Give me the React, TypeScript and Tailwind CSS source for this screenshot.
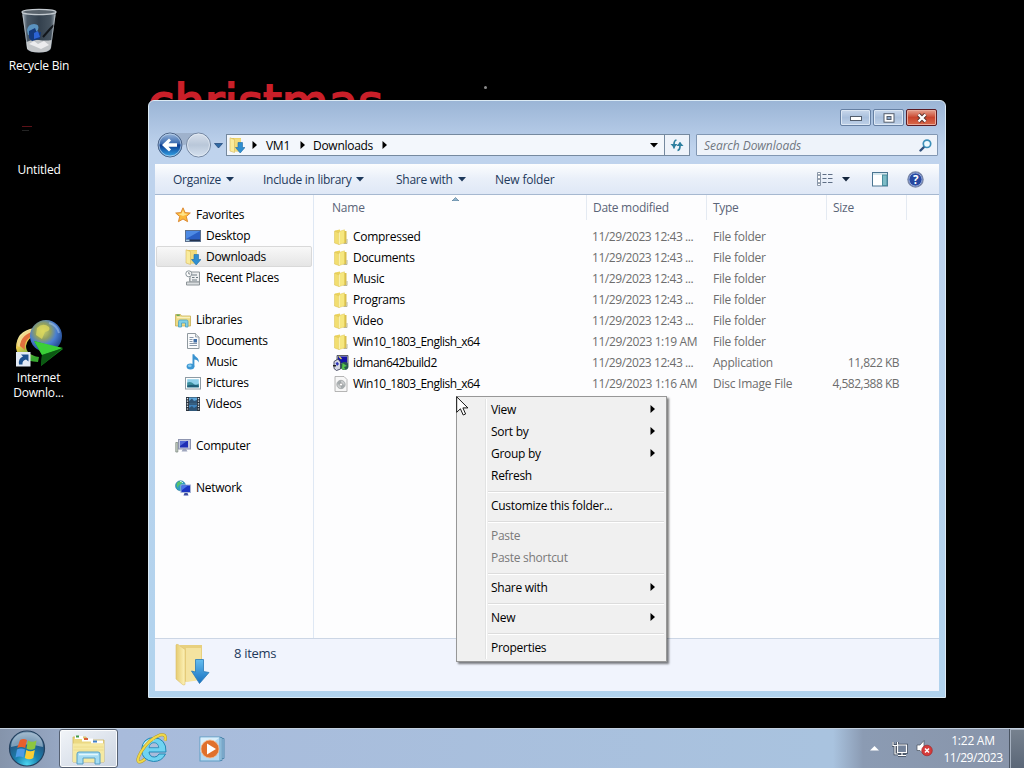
import React from 'react';

type IconProps = { className?: string };

interface NavEntry {
  label: string;
  icon: React.FC<IconProps>;
  level: number;
  selected?: boolean;
}

interface FileEntry {
  name: string;
  icon: React.FC<IconProps>;
  date: string;
  type: string;
  size?: string;
}

interface MenuEntry {
  label: string;
  submenu?: boolean;
  disabled?: boolean;
}

/* ---------- icons ---------- */

const FolderIcon: React.FC<IconProps> = ({ className }) => (
  <svg className={className} width="16" height="16" viewBox="0 0 16 16" aria-hidden="true">
    <path d="M2 1.500 7 .5v14l-5-.5z" fill="#ecd45e" />
    <path d="M10 2h3.500v12.500H10z" fill="#d9bf4c" />
    <path d="M6 2.500 11.500.8v13L6 15.500z" fill="#f6e77e" stroke="#e0c858" strokeWidth=".5" />
    <path d="M1.500 2 6 3.800v11.700L1.500 14z" fill="#f2de70" stroke="#d9bf50" strokeWidth=".5" />
    <path d="M6.300 3.500v11.500" stroke="#fdf8c8" strokeWidth=".9" />
    <path d="M11 14.500h3V10" fill="none" stroke="#b9b798" />
  </svg>
);

const DownloadsIcon: React.FC<IconProps> = ({ className }) => (
  <svg className={className} width="16" height="16" viewBox="0 0 16 16" aria-hidden="true">
    <path d="M1 1h11v13.500H4z" fill="#e6c75a" />
    <path d="M5 1.500h7V14H5z" fill="#f2dc7c" />
    <path d="M1 .8 5.500 2.500v13L1 14z" fill="#f9eb9c" stroke="#d9b95a" strokeWidth=".6" />
    <path d="M9 5.500h4.500v5H16L11.200 16 6.500 10.500H9z" fill="#2f8fd0" stroke="#1c6ca8" strokeWidth=".6" />
  </svg>
);

const StarIcon: React.FC<IconProps> = ({ className }) => (
  <svg className={className} width="16" height="16" viewBox="0 0 16 16" aria-hidden="true">
    <path d="m8 .8 2.100 4.800 5.200.4-4 3.500 1.300 5.200L8 12l-4.600 2.700 1.300-5.200L.7 6l5.200-.4z" fill="#fbb83a" stroke="#d9832b" strokeWidth=".9" strokeLinejoin="round" />
    <path d="m8 3 1.400 3.500 3.600.4L8 9 3 6.900l3.600-.4z" fill="#ffe48a" />
  </svg>
);

const DesktopIcon: React.FC<IconProps> = ({ className }) => (
  <svg className={className} width="16" height="16" viewBox="0 0 16 16" aria-hidden="true">
    <rect x=".5" y="2.500" width="15" height="11" fill="#2a5fc4" stroke="#5b6f8c" />
    <path d="M1 3h14L1 11z" fill="#4d8ae4" />
    <path d="M1 11.500h14V13H1z" fill="#23324f" />
    <path d="M1 11.500h3.500V13H1z" fill="#a8cbe6" />
  </svg>
);

const RecentIcon: React.FC<IconProps> = ({ className }) => (
  <svg className={className} width="16" height="16" viewBox="0 0 16 16" aria-hidden="true">
    <path d="M5 2h9.500v10H5z" fill="#eef0f1" stroke="#8d9498" />
    <path d="M1.500 12h13v3h-13z" fill="#d9dddf" stroke="#8d9498" />
    <path d="M7 5h5M7 7.500h2.500M11 7.500h2M7 10h5" stroke="#6f7b82" />
    <circle cx="3.800" cy="3.800" r="3" fill="#fff" stroke="#8a949a" />
    <path d="M3.800 2v2h1.500" fill="none" stroke="#5f6b72" strokeWidth=".8" />
    <path d="M4.500 8v4" stroke="#9aa2a6" />
  </svg>
);

const LibrariesIcon: React.FC<IconProps> = ({ className }) => (
  <svg className={className} width="16" height="16" viewBox="0 0 16 16" aria-hidden="true">
    <path d="M.5 2.500h5l1 1.500h9v10H.5z" fill="#edda83" stroke="#c7ae55" strokeWidth=".8" />
    <path d="M1.500 3.200h3.200" stroke="#5aa857" strokeWidth="1.400" />
    <path d="M2 5.500h13" stroke="#f9f1bf" strokeWidth="1.500" />
    <path d="M3.500 15V9.500q0-1.500 1.500-1.500h6.500q1.500 0 1.500 1.500V15h-2.500v-4h-4v4z" fill="#7fd0e6" stroke="#4b9fc0" strokeWidth=".8" />
  </svg>
);

const DocumentIcon: React.FC<IconProps> = ({ className }) => (
  <svg className={className} width="16" height="16" viewBox="0 0 16 16" aria-hidden="true">
    <path d="M2.500.5h8l3.500 3.500v11.500H2.500z" fill="#fafbfc" stroke="#8f989e" />
    <path d="M10.500.5v3.500H14" fill="#dfe5e8" stroke="#8f989e" strokeWidth=".8" />
    <path d="M4.500 4.500h4M4.500 6.500h3M4.500 8.500h3M4.500 10.500h7.500M4.500 12.500h7.500" stroke="#7c8ca0" strokeWidth=".9" />
    <path d="M8.500 6h3.500v3.500H8.500z" fill="#3f6da6" />
  </svg>
);

const MusicIcon: React.FC<IconProps> = ({ className }) => (
  <svg className={className} width="16" height="16" viewBox="0 0 16 16" aria-hidden="true">
    <ellipse cx="5.500" cy="12.500" rx="3.900" ry="3" fill="#3c97d3" />
    <path d="M7.500.3h1.700c.3 2.700 5.300 3.200 4.600 8.200-.8-2-2.400-2.700-4.400-2.900v7.200H7.500z" fill="#3a93d0" />
    <ellipse cx="4.800" cy="11.800" rx="1.900" ry="1.200" fill="#8accf0" />
  </svg>
);

const PicturesIcon: React.FC<IconProps> = ({ className }) => (
  <svg className={className} width="16" height="16" viewBox="0 0 16 16" aria-hidden="true">
    <rect x=".5" y="2.500" width="15" height="11.500" fill="#fdfefe" stroke="#8e9ba4" />
    <rect x="2.200" y="4.200" width="11.600" height="8.100" fill="#8fd0ea" />
    <path d="M2.200 7.500q4-1.500 6 1t5.600 0v3.800H2.200z" fill="#3d8f9e" />
    <path d="M2.200 10.500q6-1.500 11.600 0v1.800H2.200z" fill="#1f5e78" />
  </svg>
);

const VideosIcon: React.FC<IconProps> = ({ className }) => (
  <svg className={className} width="16" height="16" viewBox="0 0 16 16" aria-hidden="true">
    <rect x="1" y="1" width="14" height="14" fill="#2a3440" />
    <rect x="4" y="1.500" width="8" height="6" fill="#5da7dc" />
    <rect x="4" y="8.500" width="8" height="6" fill="#3f83bd" />
    <path d="m4 5 3-2.500L9 5l3-1v3.500H4zM4 12l3-2 2 2 3-2v4.500H4z" fill="#2f5476" />
    <path d="M2.500 2v12M13.500 2v12" stroke="#e6ebef" strokeWidth="1.300" strokeDasharray="1.200 1.400" />
  </svg>
);

const ComputerIcon: React.FC<IconProps> = ({ className }) => (
  <svg className={className} width="16" height="16" viewBox="0 0 16 16" aria-hidden="true">
    <path d="M.8 4.500h2v9.500h-2z" fill="#c8d2c4" stroke="#7f8a84" strokeWidth=".8" />
    <rect x="3.500" y="1.500" width="12" height="9.500" fill="#c3c8dc" stroke="#8e95b0" />
    <rect x="5" y="3" width="8" height="6.500" fill="#1f2fb5" />
    <path d="M5 3h7L5 8z" fill="#5068d6" />
    <path d="M8 11h3l1.500 2.500H6.500z" fill="#9fa6bd" />
  </svg>
);

const NetworkIcon: React.FC<IconProps> = ({ className }) => (
  <svg className={className} width="16" height="16" viewBox="0 0 16 16" aria-hidden="true">
    <circle cx="5.500" cy="5.800" r="5" fill="#2f9fc4" stroke="#20739a" strokeWidth=".6" />
    <path d="M2 3q3-3 5-1 0 2-2 2.500T3 8Q1 6 2 3z" fill="#58c36a" />
    <path d="M5 1.500q2 0 3 1.500" stroke="#d6f5ec" fill="none" />
    <rect x="6" y="5" width="9.500" height="7.500" fill="#1d36c2" stroke="#a9b5d6" />
    <path d="M6.500 5.500H13l-6.500 5z" fill="#4a74e8" />
    <path d="M9.500 13h3l1 2.500h-5z" fill="#3c4da0" />
  </svg>
);

const InstallerIcon: React.FC<IconProps> = ({ className }) => (
  <svg className={className} width="16" height="16" viewBox="0 0 16 16" aria-hidden="true">
    <path d="M4 .5h11v9H4z" fill="#b9bcc6" stroke="#3b3e49" strokeWidth=".8" />
    <path d="M5 1.500h9v6.500H5z" fill="#1412a8" />
    <path d="M1 6.500 5 4l2.500 3v7l-4 1.500L1 13.500z" fill="#d5d8e4" stroke="#2b2d4a" strokeWidth=".8" />
    <path d="m2.500 8 2-1 1.500 2-2 2z" fill="#2c34b8" />
    <circle cx="11.500" cy="11" r="4" fill="#2a5a50" />
    <path d="m9.500 8 4.500 3-3 1 1.500 3-3.500-1z" fill="#54c74a" />
    <path d="M0 10h3v1.500H0z" fill="#222" />
    <path d="M6 1.500 8.500 4" stroke="#e9dc5d" strokeWidth="1.300" />
  </svg>
);

const DiscImageIcon: React.FC<IconProps> = ({ className }) => (
  <svg className={className} width="16" height="16" viewBox="0 0 16 16" aria-hidden="true">
    <path d="M2 .5h9l3 3v12H2z" fill="#f7f7f7" stroke="#a3a3a3" strokeWidth=".8" />
    <circle cx="8" cy="8.500" r="4.200" fill="#c9cccd" stroke="#a0a3a5" strokeWidth=".8" />
    <path d="M8 4.500A4 4 0 0 0 4.200 8.500L8 8.500zM8 12.500a4 4 0 0 0 3.800-4H8z" fill="#a5abad" />
    <circle cx="8" cy="8.500" r="1.500" fill="#fff" stroke="#888" strokeWidth=".6" />
  </svg>
);

const RecycleBinIcon = () => (
  <svg width="40" height="48" viewBox="0 0 40 48" aria-hidden="true">
    <defs>
      <linearGradient id="binGlass" x1="0" x2="1">
        <stop offset="0" stopColor="#aeb9c2" />
        <stop offset=".15" stopColor="#4b5a68" />
        <stop offset=".5" stopColor="#33404d" />
        <stop offset=".85" stopColor="#46535f" />
        <stop offset="1" stopColor="#a3adb5" />
      </linearGradient>
    </defs>
    <path d="M3 4h34l-5 36q-.5 4.500-12 4.500T8 40z" fill="url(#binGlass)" />
    <path d="M7.500 34q6-3 12.500-2t12.500 0l-1 9q-3 3.500-11.500 3.500T8 41z" fill="#c2c5c8" />
    <path d="m10 36 5-3 4 3 6-3 5 4-8 4-7-3z" fill="#ececee" />
    <path d="M8 22q1-6 7-6t4 6l-4 4-6 1z" fill="#5b93bf" />
    <path d="m10 23 6-3 2 5 4-1-1 7-8 2-3-3z" fill="#143a7c" />
    <path d="m15 25 4-2 2 6-6 2z" fill="#2c63d4" />
    <path d="m24 29 7-8 4-4" stroke="#12161b" strokeWidth="2" fill="none" />
    <ellipse cx="20" cy="4" rx="17" ry="2.600" fill="#59636c" stroke="#c3cad0" strokeWidth="1.300" />
    <path d="m4 7 4.500 33M36 7l-4.500 33" stroke="#d6dce0" strokeWidth="1" opacity=".5" />
  </svg>
);

const IdmIcon = () => (
  <svg width="50" height="48" viewBox="0 0 50 48" aria-hidden="true">
    <defs>
      <radialGradient id="idmGlobe" cx=".4" cy=".35" r=".7">
        <stop offset="0" stopColor="#ccd268" />
        <stop offset=".35" stopColor="#8f9f62" />
        <stop offset=".6" stopColor="#4a7fd0" />
        <stop offset="1" stopColor="#1d4287" />
      </radialGradient>
      <linearGradient id="idmSwoosh" x1="0" y1="0" x2=".5" y2="1">
        <stop offset="0" stopColor="#c3dc6e" />
        <stop offset=".25" stopColor="#f0e6a0" />
        <stop offset=".5" stopColor="#e9c84c" />
        <stop offset="1" stopColor="#37a82f" />
      </linearGradient>
    </defs>
    <path d="M20 9Q2 12 2 29q2 13 22 14l1-5Q12 36 12 27q1-8 11-12z" fill="url(#idmSwoosh)" />
    <path d="M20 10Q6 14 6 27l5 4q-2-12 12-16z" fill="#e2703e" />
    <path d="M20 10Q5 13 3.500 27l2 1Q7 15 21 12z" fill="#f3d98c" />
    <circle cx="32" cy="17" r="16" fill="url(#idmGlobe)" />
    <path d="M23 9q6-6 12-1 2 4-4 5l-3 7-6-4z" fill="#dfd95c" opacity=".75" />
    <path d="M35 4q8 2 10 10" stroke="#a9c9f2" strokeWidth="2" opacity=".5" fill="none" />
    <path d="m20 22 29 8-22 17 1-11z" fill="#148c1e" />
    <path d="m20 22 29 7-21 7z" fill="#3bcf38" />
    <path d="m28 36 21-7-22 18z" fill="#0c5913" />
    <rect x="2" y="33" width="14.500" height="14.500" fill="#e3eaf5" />
    <path d="M5 45.500q-1-6 4-8L7 35.500h7.500v7l-2.500-2Q8 41.500 8.500 45.500z" fill="#1f528f" />
  </svg>
);

const BigDownloadsIcon = () => (
  <svg width="36" height="44" viewBox="0 0 36 44" aria-hidden="true">
    <defs>
      <linearGradient id="bigFront" x1="0" x2="1">
        <stop offset="0" stopColor="#e6cc72" />
        <stop offset="1" stopColor="#fdf2b8" />
      </linearGradient>
      <linearGradient id="bigArrow" x1="0" x2="0" y1="0" y2="1">
        <stop offset="0" stopColor="#65bdf0" />
        <stop offset="1" stopColor="#1670c0" />
      </linearGradient>
    </defs>
    <path d="M6 2h22v34l-18 3z" fill="#e8d07f" />
    <path d="M12 5h15v32l-15 2z" fill="#f4e3a0" />
    <path d="M2 2q0-1 2-.5l7 5v35q-1 1-2.500 0L2 36z" fill="url(#bigFront)" stroke="#dcc06b" strokeWidth=".6" />
    <path d="M21.500 16.500h8v12l5.500 1-9.500 11L17.500 28l4 1z" fill="url(#bigArrow)" stroke="#2a7ab6" strokeWidth=".8" />
  </svg>
);

const StartOrb = () => (
  <svg width="38" height="38" viewBox="0 0 38 38" aria-hidden="true">
    <defs>
      <radialGradient id="orb" cx=".5" cy=".95" r=".95">
        <stop offset="0" stopColor="#4cd5f0" />
        <stop offset=".35" stopColor="#1b83b0" />
        <stop offset=".7" stopColor="#235a86" />
        <stop offset="1" stopColor="#7e9db7" />
      </radialGradient>
    </defs>
    <circle cx="19" cy="18.500" r="17.500" fill="url(#orb)" stroke="#23405e" strokeWidth="1.200" />
    <path d="M3 17q1-14 16-14.500T35 17Q19 12 3 17z" fill="#d5e2ec" opacity=".5" />
    <path d="M12 10q3.500-2 7 0l-1.800 8q-4-2-8 0z" fill="#e8602c" />
    <path d="M20 10.500q4 2.500 8.500 0L27 18.500q-4 2.500-8.500 0z" fill="#8dc63f" />
    <path d="M9 19.500q4-2 8 0l-1.500 8q-4-2-8 0z" fill="#4d9be6" />
    <path d="M18.300 20q4 2.500 8.500 0l-1.500 8q-4 2.500-8.500 0z" fill="#fbce34" />
  </svg>
);

const ExplorerTaskIcon = () => (
  <svg width="34" height="32" viewBox="0 0 34 32" aria-hidden="true">
    <path d="M1 3h13l1.500 3H32v22H1z" fill="#ecd983" stroke="#cdb45e" strokeWidth=".8" />
    <path d="M3 3.500h8" stroke="#fff" strokeWidth="3" />
    <path d="M4 2.500h3" stroke="#3f9b49" strokeWidth="2" />
    <path d="M10 6h11" stroke="#fff" strokeWidth="3" />
    <path d="M12 5h4" stroke="#d8603c" strokeWidth="2" />
    <path d="M19 8h12" stroke="#fff" strokeWidth="3" />
    <path d="M21 7.500h4" stroke="#3f7fcb" strokeWidth="2" />
    <path d="M1 9.500h31V28H1z" fill="#f5e9a2" />
    <path d="M1.500 13h30M1.500 16h30" stroke="#eedc8c" />
    <path d="M5 30V20q0-2 2-2h19q2 0 2 2v10h-5v-6H11v6z" fill="#a5dcf3" stroke="#569ec4" />
    <path d="M7 20.500h19" stroke="#e2f6fd" strokeWidth="1.500" />
  </svg>
);

const InternetExplorerIcon = () => (
  <svg width="34" height="34" viewBox="0 0 34 34" aria-hidden="true">
    <path d="M30.500 22Q27 29.500 18.500 29.500 7 28.500 6.500 18 7.500 6 18.500 5.500 31.500 6.500 31 20H14q.5 5 5.500 5 3 0 4.500-3z" fill="#6fd3f1" stroke="#2387b4" strokeWidth="1" />
    <path d="M14 15.700q.8-5 5-5t4.800 5z" fill="#aebfdb" stroke="#2387b4" strokeWidth=".8" />
    <path d="M9 13q3-5 10-5.200" stroke="#c8f1fc" strokeWidth="2" fill="none" />
    <path d="M30 8.500Q32 1.500 25 3 14 7 6 20q-5 8.500-2 10 2 .5 6-3" fill="none" stroke="#b99c25" strokeWidth="3" />
    <path d="M30 8.500Q32 1.500 25 3 14 7 6 20q-5 8.500-2 10 2 .5 6-3" fill="none" stroke="#efd84a" strokeWidth="2" />
  </svg>
);

const MediaPlayerIcon = () => (
  <svg width="28" height="28" viewBox="0 0 28 28" aria-hidden="true">
    <path d="M20 3.500h5v20h-5z" fill="#9fc5e4" stroke="#5289ae" />
    <path d="M17 2.500h6v23h-6z" fill="#b8d9ef" stroke="#5289ae" />
    <rect x="1" y="2" width="20" height="24" fill="#b5d9f2" stroke="#5f9dc4" />
    <path d="m1.500 2.500 19 0-19 15z" fill="#d9effb" />
    <circle cx="11" cy="14" r="9" fill="#e0702c" stroke="#f5b98d" strokeWidth=".8" />
    <path d="M8 8.500 17 14l-9 5.500z" fill="#fff" />
  </svg>
);

const SubmenuArrow = () => (
  <svg width="5" height="8" viewBox="0 0 5 8" aria-hidden="true">
    <path d="M.5 0 5 4 .5 8z" fill="#000" />
  </svg>
);

const DropArrow: React.FC<{ color?: string }> = ({ color = '#1e395b' }) => (
  <svg width="8" height="5" viewBox="0 0 8 5" aria-hidden="true">
    <path d="M0 0h8L4 4.500z" fill={color} />
  </svg>
);

/* ---------- data ---------- */

const navGroups: NavEntry[][] = [
  [
    { label: 'Favorites', icon: StarIcon, level: 0 },
    { label: 'Desktop', icon: DesktopIcon, level: 1 },
    { label: 'Downloads', icon: DownloadsIcon, level: 1, selected: true },
    { label: 'Recent Places', icon: RecentIcon, level: 1 },
  ],
  [
    { label: 'Libraries', icon: LibrariesIcon, level: 0 },
    { label: 'Documents', icon: DocumentIcon, level: 1 },
    { label: 'Music', icon: MusicIcon, level: 1 },
    { label: 'Pictures', icon: PicturesIcon, level: 1 },
    { label: 'Videos', icon: VideosIcon, level: 1 },
  ],
  [{ label: 'Computer', icon: ComputerIcon, level: 0 }],
  [{ label: 'Network', icon: NetworkIcon, level: 0 }],
];

const files: FileEntry[] = [
  { name: 'Compressed', icon: FolderIcon, date: '11/29/2023 12:43 ...', type: 'File folder' },
  { name: 'Documents', icon: FolderIcon, date: '11/29/2023 12:43 ...', type: 'File folder' },
  { name: 'Music', icon: FolderIcon, date: '11/29/2023 12:43 ...', type: 'File folder' },
  { name: 'Programs', icon: FolderIcon, date: '11/29/2023 12:43 ...', type: 'File folder' },
  { name: 'Video', icon: FolderIcon, date: '11/29/2023 12:43 ...', type: 'File folder' },
  { name: 'Win10_1803_English_x64', icon: FolderIcon, date: '11/29/2023 1:19 AM', type: 'File folder' },
  { name: 'idman642build2', icon: InstallerIcon, date: '11/29/2023 12:43 ...', type: 'Application', size: '11,822 KB' },
  { name: 'Win10_1803_English_x64', icon: DiscImageIcon, date: '11/29/2023 1:16 AM', type: 'Disc Image File', size: '4,582,388 KB' },
];

const menuGroups: MenuEntry[][] = [
  [
    { label: 'View', submenu: true },
    { label: 'Sort by', submenu: true },
    { label: 'Group by', submenu: true },
    { label: 'Refresh' },
  ],
  [{ label: 'Customize this folder...' }],
  [
    { label: 'Paste', disabled: true },
    { label: 'Paste shortcut', disabled: true },
  ],
  [{ label: 'Share with', submenu: true }],
  [{ label: 'New', submenu: true }],
  [{ label: 'Properties' }],
];

/* ---------- window parts ---------- */

const TitleBar = () => (
  <div className="flex h-[30px] shrink-0 items-start justify-end gap-[2px] pr-[2px] pt-[8px]">
    <button aria-label="Minimize" className="flex h-[17px] w-[31px] items-center justify-center rounded-[2px] border border-[#6680a3] bg-linear-to-b from-[#c9d8ec] via-[#a9bfdc] to-[#bfd1e8] shadow-[inset_0_0_0_1px_#dce7f4]">
      <svg width="12" height="6" viewBox="0 0 12 6"><rect x=".5" y="1.500" width="11" height="4" fill="#fff" stroke="#535d6c" /></svg>
    </button>
    <button aria-label="Maximize" className="flex h-[17px] w-[31px] items-center justify-center rounded-[2px] border border-[#6680a3] bg-linear-to-b from-[#c9d8ec] via-[#a9bfdc] to-[#bfd1e8] shadow-[inset_0_0_0_1px_#dce7f4]">
      <svg width="12" height="10" viewBox="0 0 12 10"><rect x="1" y=".7" width="10" height="8.500" fill="#fff" stroke="#535d6c" /><rect x="4" y="3.500" width="4" height="3" fill="#8fa9cb" stroke="#535d6c" /></svg>
    </button>
    <button aria-label="Close" className="flex h-[17px] w-[31px] items-center justify-center rounded-[2px] border border-[#5b1a22] bg-linear-to-b from-[#e3a08f] via-[#c8432c] to-[#d9694a] shadow-[inset_0_0_0_1px_#e9aa9a]">
      <svg width="12" height="10" viewBox="0 0 12 10"><path d="m2.500 1.500 7 7m0-7-7 7" stroke="#54322f" strokeWidth="4" /><path d="m2.500 1.500 7 7m0-7-7 7" stroke="#fff" strokeWidth="2.300" /></svg>
    </button>
  </div>
);

const AddressRow = () => (
  <div className="flex h-[33px] shrink-0 items-start">
    <svg className="ml-[2px] shrink-0" width="68" height="28" viewBox="0 0 68 28" aria-hidden="true">
      <defs>
        <linearGradient id="back" x1="0" x2="0" y1="0" y2="1">
          <stop offset="0" stopColor="#9db9dc" />
          <stop offset=".45" stopColor="#3768ae" />
          <stop offset=".5" stopColor="#0b3b90" />
          <stop offset="1" stopColor="#35a9ea" />
        </linearGradient>
        <linearGradient id="fwd" x1="0" x2="0" y1="0" y2="1">
          <stop offset="0" stopColor="#d9e1ec" />
          <stop offset=".5" stopColor="#b9c7d9" />
          <stop offset="1" stopColor="#d6e2f0" />
        </linearGradient>
      </defs>
      <path d="M13 2h28v8l-14 4-14-4z" fill="#9fb2cc" />
      <circle cx="13" cy="14" r="12" fill="url(#back)" stroke="#4d6487" />
      <circle cx="13" cy="14" r="11" fill="none" stroke="#c3d8ee" strokeWidth=".7" />
      <path d="M5 14 12 7.500l2 2L11.500 12.300h8.500v3.400h-8.500L14 18.500l-2 2z" fill="#fff" />
      <circle cx="41.500" cy="14" r="12" fill="url(#fwd)" stroke="#71849f" />
      <circle cx="41.500" cy="14" r="11" fill="none" stroke="#e7eef6" strokeWidth=".7" />
      <path d="M57.500 12.500h8l-4 4.500z" fill="#2f6aa5" stroke="#1d4475" strokeWidth=".7" />
    </svg>
    <div className="ml-[1px] mt-[3px] flex h-[22px] w-[439px] shrink-0 items-center border border-[#75899f] bg-[#f3f7fc]">
      <DownloadsIcon className="ml-[2px]" />
      <span className="ml-[7px]"><SubmenuArrow /></span>
      <span className="ml-[9px] w-[24px]">VM1</span>
      <span className="ml-[10px]"><SubmenuArrow /></span>
      <span className="ml-[8px] w-[60px]">Downloads</span>
      <span className="ml-[9px]"><SubmenuArrow /></span>
      <span className="ml-auto mr-[6px]"><DropArrow color="#000" /></span>
    </div>
    <button aria-label="Refresh" className="mt-[3px] flex h-[22px] w-[25px] items-center justify-center border border-l-0 border-[#75899f] bg-[#eef3fa]">
      <svg width="14" height="14" viewBox="0 0 14 14">
        <path d="M4 10.500V6.500M6.500 2Q4 2.500 4 6.500M10 4.500v4M7.500 12.500Q10 12 10 8" fill="none" stroke="#2d7f9f" strokeWidth="1.700" />
        <path d="M.5 6h7L4 10zM6.500 8h7L10 4z" fill="#2d7f9f" />
      </svg>
    </button>
    <div className="ml-[6px] mt-[3px] flex h-[22px] w-[242px] items-center justify-between rounded-[1px] border border-[#8197b3] bg-[#eef3fa] pl-[7px] pr-[5px]">
      <span className="italic tracking-[-0.05px] text-[#707780]">Search Downloads</span>
      <svg width="13" height="13" viewBox="0 0 13 13" aria-hidden="true">
        <path d="M6 7 1.500 11.500" stroke="#2f4f7c" strokeWidth="2.400" strokeLinecap="round" />
        <circle cx="8" cy="4.800" r="3.700" fill="#eefaff" stroke="#3c8fb8" strokeWidth="1.700" />
      </svg>
    </div>
  </div>
);

const Toolbar = () => (
  <div className="flex h-[31px] shrink-0 items-center border-b border-[#a6b8d0] bg-linear-to-b from-[#fcfdfe] via-[#e9eff9] via-50% to-[#dfe8f6] pl-[18px] text-[#1e395b]">
    <div className="flex w-[90px] items-center gap-[5px]">Organize <DropArrow /></div>
    <div className="flex w-[133px] items-center gap-[5px]">Include in library <DropArrow /></div>
    <div className="flex w-[99px] items-center gap-[5px]">Share with <DropArrow /></div>
    <div className="tracking-[-0.2px]">New folder</div>
    <div className="ml-auto flex items-center pr-[15px]">
      <svg width="16" height="14" viewBox="0 0 16 14" aria-hidden="true">
        <path d="M.5.5h3v13h-3z" fill="#fff" stroke="#8a97a8" />
        <path d="M1 3h2M1 7h2M1 11h2" stroke="#3b4e68" />
        <path d="M5.500 2.500h4M5.500 6.500h4M5.500 10.500h4M11 2.500h4.500M11 6.500h4.500M11 10.500h4.500" stroke="#5e6e85" />
      </svg>
      <span className="ml-[9px]"><DropArrow color="#14253c" /></span>
      <svg className="ml-[22px]" width="16" height="15" viewBox="0 0 16 15" aria-hidden="true">
        <rect x=".5" y=".5" width="15" height="13.500" fill="#fff" stroke="#4b7591" />
        <path d="M1 1h14v2H1z" fill="#d4e6ed" />
        <rect x="10.500" y="3" width="4.500" height="10.500" fill="#7dbcc7" stroke="#4a8d9d" />
      </svg>
      <svg className="ml-[19px]" width="17" height="17" viewBox="0 0 17 17" aria-hidden="true">
        <circle cx="8.500" cy="8.500" r="7.600" fill="#2748a0" stroke="#7c88a6" strokeWidth="1.300" />
        <circle cx="8.500" cy="8.500" r="6.500" fill="none" stroke="#a9bce6" strokeWidth=".8" />
        <text x="8.500" y="12.700" textAnchor="middle" fontFamily="Open Sans, sans-serif" fontWeight="700" fontSize="11.500" fill="#fff">?</text>
      </svg>
    </div>
  </div>
);

const NavPane = () => (
  <div className="flex w-[159px] shrink-0 flex-col gap-[21px] border-r border-[#dfe8f4] pt-[9px]">
    {navGroups.map((group) => (
      <ul key={group[0].label}>
        {group.map(({ label, icon: Icon, level, selected }) => (
          <li
            key={label}
            className={`ml-[1px] mr-[1px] flex h-[21px] items-center gap-[5px] rounded-[2px] border ${level ? 'pl-[28px]' : 'pl-[18px]'} ${
              selected ? 'border-[#d9d9d9] bg-linear-to-b from-[#f8f8f8] to-[#e5e5e5]' : 'border-transparent'
            }`}
          >
            <Icon className="shrink-0" />
            <span>{label}</span>
          </li>
        ))}
      </ul>
    ))}
  </div>
);

const FileList = () => (
  <div className="min-w-0 grow">
    <div className="flex h-[25px] text-[#5a6478]">
      <div className="flex w-[273px] items-center border-r border-[#e4eaf2] pl-[18px] tracking-[-0.2px]">
        Name
        <svg className="mb-[18px] ml-[87px]" width="7" height="4" viewBox="0 0 7 4" aria-hidden="true"><path d="M0 4 3.500.5 7 4z" fill="#8fb4cd" stroke="#4b6f8b" strokeWidth=".6" /></svg>
      </div>
      <div className="flex w-[120px] items-center border-r border-[#e4eaf2] pl-[6px]">Date modified</div>
      <div className="flex w-[120px] items-center border-r border-[#e4eaf2] pl-[6px]">Type</div>
      <div className="flex w-[80px] items-center border-r border-[#e4eaf2] pl-[6px]">Size</div>
    </div>
    <div className="pt-[6px]">
      {files.map(({ name, icon: Icon, date, type, size }, i) => (
        <div key={i} className="flex h-[21px] items-center text-[#6d6d6d]">
          <Icon className="ml-[19px] shrink-0" />
          <span className={`ml-[4px] w-[239px] text-black ${/\d/.test(name) ? 'tracking-[-0.52px]' : ''}`}>{name}</span>
          <span className={`w-[121px] ${date.endsWith('AM') ? 'tracking-[-0.38px]' : 'tracking-[-0.44px]'}`}>{date}</span>
          <span className="w-[107px] tracking-[-0.24px]">{type}</span>
          <span className="w-[79px] text-right tracking-[-0.5px]">{size}</span>
        </div>
      ))}
    </div>
  </div>
);

const ExplorerWindow = () => (
  <section className="absolute left-[148px] top-[100px] flex h-[598px] w-[798px] flex-col rounded-t-[6px] border border-[#dcebf5] bg-linear-to-b from-[#9bb5d6] via-[#bfd3ed] via-8% to-[#b1d3ee] px-[6px] pb-[6px]">
    <TitleBar />
    <AddressRow />
    <div className="flex grow flex-col bg-[#fdfdfe]">
      <Toolbar />
      <div className="flex h-[443px]">
        <NavPane />
        <FileList />
      </div>
      <div className="flex grow items-start border-t border-[#ccd6e5] bg-[#f1f4fd] text-[#1e395b]">
        <span className="ml-[19px] mt-[4px]"><BigDownloadsIcon /></span>
        <span className="ml-[24px] mt-[7px] text-[13px] tracking-[-0.3px]">8 items</span>
      </div>
    </div>
  </section>
);

const ContextMenu = () => (
  <div className="absolute left-[456px] top-[396px] h-[266px] w-[211px] border border-[#979797] bg-[#f0f0f0] p-[2px] shadow-[2px_2px_2px_rgba(0,0,0,0.5)]">
    <div className="flex h-full">
      <div className="w-[27px] shrink-0 border-r border-[#e2e3e3] shadow-[1px_0_0_#fff]" />
      <div className="grow">
        {menuGroups.map((group, i) => (
          <div key={i}>
            {i > 0 && (
              <div className="flex h-[8px] items-center pl-[2px] pt-px">
                <div className="h-[2px] w-full border-t border-[#dcdcdc] bg-white" />
              </div>
            )}
            {group.map(({ label, submenu, disabled }) => (
              <div key={label} className={`flex h-[22px] items-center justify-between pb-[2px] pl-[5px] pr-[9px] ${disabled ? 'text-[#7a7a7a]' : 'text-black'}`}>
                <span>{label}</span>
                {submenu && <SubmenuArrow />}
              </div>
            ))}
          </div>
        ))}
      </div>
    </div>
  </div>
);

const Taskbar = () => (
  <footer className="relative flex h-[40px] shrink-0 items-center border-t border-[#c3d0df] bg-linear-to-r from-[#8594ab] from-0% via-[#8c9cb4] via-[58px] to-[#8a97ac]">
    <div className="flex h-full grow items-center bg-linear-to-r from-[#8594ab] from-0% via-[#a8bbdb] via-[118px] to-[#a9c3df]">
      <div className="ml-[8px]"><StartOrb /></div>
      <div className="ml-[13px] flex h-[39px] w-[59px] items-center justify-center rounded-[3px] border border-[#566172] bg-linear-to-br from-[#f1f4f8] to-[#ccd5e2] pt-[2px] shadow-[inset_0_0_0_1px_#fbfcfd]">
        <ExplorerTaskIcon />
      </div>
      <div className="ml-[17px]"><InternetExplorerIcon /></div>
      <div className="ml-[30px]"><MediaPlayerIcon /></div>
    </div>
    <div className="flex h-full w-[199px] shrink-0 items-center bg-linear-to-r from-[#a9c3df] from-[8px] via-[#8b9bb3] via-[38px] to-[#8894a9] pl-[45px] text-white">
      <svg width="9" height="5" viewBox="0 0 9 5" aria-hidden="true"><path d="M0 4.500 4.500 0 9 4.500z" fill="#fff" /></svg>
      <svg className="ml-[13px]" width="16" height="16" viewBox="0 0 16 16" aria-hidden="true">
        <path d="M5.500 4h9v7.500h-9zM10 12v2.500M6 14.500h8M1 1v3.500h4.500V1M3 4.500V13h3" fill="none" stroke="#3a4555" strokeWidth="2.600" />
        <path d="M5.500 4h9v7.500h-9z" fill="#74839a" />
        <path d="M5.500 4h9v7.500h-9zM10 12v2.500M6 14.500h8M1 1v3.500h4.500V1M3 4.500V13h3" fill="none" stroke="#fff" strokeWidth="1.200" />
      </svg>
      <svg className="ml-[8px]" width="17" height="17" viewBox="0 0 17 17" aria-hidden="true">
        <path d="M1 5h3l4-4.500v14L4 10.500H1z" fill="#fff" stroke="#48525f" strokeWidth=".7" />
        <circle cx="11" cy="10.500" r="5.300" fill="#d53b3b" stroke="#9b2222" strokeWidth=".6" />
        <path d="m9 8.500 4 4m0-4-4 4" stroke="#fff" strokeWidth="1.500" />
      </svg>
      <div className="ml-auto w-[62px] text-center leading-[17px]">
        <div className="tracking-[-0.25px]">1:22 AM</div>
        <div className="tracking-[-0.45px]">11/29/2023</div>
      </div>
      <div className="ml-[5px] h-full w-[15px] border-l border-[#4b5563] bg-linear-to-b from-[#77828f] to-[#5b6778] shadow-[inset_1px_1px_0_#a6b1c0]" />
    </div>
  </footer>
);

const App: React.FC = () => (
  <div className="relative flex h-[768px] w-[1024px] flex-col overflow-hidden bg-black font-['Open_Sans','Noto_Sans',sans-serif] text-[12px] leading-[15px] tracking-[-0.28px] whitespace-nowrap">
    <main className="relative grow">
      <div className="absolute left-[148px] top-[74px] font-['DejaVu_Sans',sans-serif] text-[48px] leading-[56px] tracking-normal text-[#c91f29] [-webkit-text-stroke:1.800px_#c91f29]">christmas</div>
      <div className="absolute left-[484px] top-[86px] size-[3px] rounded-full bg-[#8b8b8b]" />
      <div className="absolute left-0 top-[8px] flex w-[78px] flex-col items-center text-white">
        <RecycleBinIcon />
        <span className="mt-[2px] tracking-[-0.2px]">Recycle Bin</span>
      </div>
      <div className="absolute left-0 top-[112px] flex w-[78px] flex-col items-center text-white">
        <div className="h-[48px] w-[40px] pl-[3px] pt-[14px]">
          <div className="h-px w-[10px] bg-[#5c1218]" />
          <div className="mt-[3px] h-px w-[7px] bg-[#242424]" />
        </div>
        <span className="mt-[2px] tracking-[-0.2px]">Untitled</span>
      </div>
      <div className="absolute left-0 top-[319px] flex w-[77px] flex-col items-center text-center text-white">
        <IdmIcon />
        <span className="mt-[3px] tracking-[-0.2px]">Internet<br />Downlo...</span>
      </div>
      <ExplorerWindow />
      <ContextMenu />
      <svg className="absolute left-[456px] top-[396px]" width="14" height="22" viewBox="0 0 14 22" aria-hidden="true">
        <path d="M.7.8v15.500l3.700-3.500 2.800 6.200 2.400-1-2.700-6.100h5z" fill="#fff" stroke="#000" strokeWidth=".9" />
      </svg>
    </main>
    <Taskbar />
  </div>
);

export default App;
